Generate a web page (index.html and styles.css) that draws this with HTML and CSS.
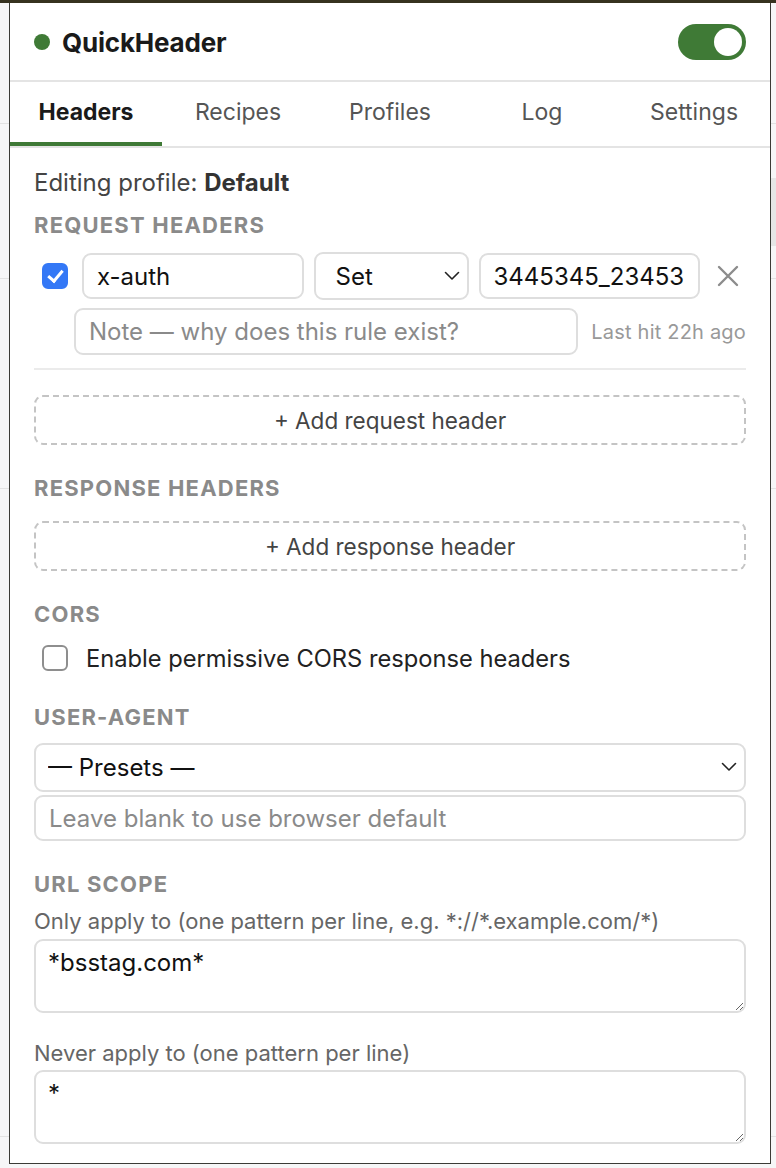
FILE: index.html
```html
<!DOCTYPE html>
<html lang="en">
<head>
<meta charset="UTF-8">
<meta name="viewport" content="width=device-width, initial-scale=1.0">
<title>QuickHeader</title>
<link rel="stylesheet" href="styles.css">
</head>
<body>
<div class="popup">
    <header class="topbar">
        <div class="brand">
            <span class="dot"></span>
            <h1>QuickHeader</h1>
        </div>
        <div class="switch on"><span class="knob"></span></div>
    </header>

    <nav class="tabs">
        <a class="tab active">Headers</a>
        <a class="tab">Recipes</a>
        <a class="tab">Profiles</a>
        <a class="tab">Log</a>
        <a class="tab">Settings</a>
    </nav>

    <main class="content">
        <p class="profile">Editing profile: <b>Default</b></p>

        <h2 class="section-title first">Request headers</h2>
        <div class="rule">
            <div class="rule-main">
                <input type="checkbox" class="check" checked>
                <input class="field" type="text" value="x-auth">
                <div class="select-wrap op">
                    <select class="field select">
                        <option>Set</option>
                        <option>Append</option>
                        <option>Remove</option>
                    </select>
                    <svg class="chev" width="16" height="10" viewBox="0 0 16 10"><path d="M1.5 1.5 8 8l6.5-6.5" fill="none" stroke="#222" stroke-width="1.6" stroke-linecap="round" stroke-linejoin="round"/></svg>
                </div>
                <input class="field" type="text" value="3445345_23453">
                <button class="remove" title="Remove">
                    <svg width="22" height="22" viewBox="0 0 22 22"><path d="M2 2l18 18M20 2 2 20" stroke="#8c8c8c" stroke-width="2.4" stroke-linecap="round"/></svg>
                </button>
            </div>
            <div class="rule-note">
                <input class="field" type="text" placeholder="Note — why does this rule exist?">
                <span class="last-hit">Last hit 22h ago</span>
            </div>
        </div>
        <button class="add-btn first">+ Add request header</button>

        <h2 class="section-title">Response headers</h2>
        <button class="add-btn">+ Add response header</button>

        <h2 class="section-title">CORS</h2>
        <label class="check-row">
            <input type="checkbox" class="check">
            <span>Enable permissive CORS response headers</span>
        </label>

        <h2 class="section-title ua">User-Agent</h2>
        <div class="select-wrap ua-select">
            <select class="field select wide">
                <option>— Presets —</option>
            </select>
            <svg class="chev" width="16" height="10" viewBox="0 0 16 10"><path d="M1.5 1.5 8 8l6.5-6.5" fill="none" stroke="#222" stroke-width="1.6" stroke-linecap="round" stroke-linejoin="round"/></svg>
        </div>
        <input class="field ua-input" type="text" placeholder="Leave blank to use browser default">

        <h2 class="section-title">URL scope</h2>
        <p class="hint">Only apply to (one pattern per line, e.g. *://*.example.com/*)</p>
        <textarea class="field area">*bsstag.com*</textarea>
        <p class="hint never">Never apply to (one pattern per line)</p>
        <textarea class="field area">*</textarea>
    </main>
</div>
</body>
</html>
```

FILE: styles.css
```css
html, body {
    margin: 0;
    padding: 0;
    height: 100%;
    overflow: hidden;
}
body {
    font-family: Inter, "Noto Sans", "Liberation Sans", sans-serif;
    color: #1d1d1d;
    background:
        linear-gradient(#36321f, #36321f) top left / 100% 3px no-repeat,
        linear-gradient(#e6e6e6, #e6e6e6) right 0 top 178px / 6px 68px no-repeat,
        linear-gradient(#e2e2e2, #e2e2e2) 0 123px / 100% 1px no-repeat,
        linear-gradient(#e2e2e2, #e2e2e2) 0 278px / 100% 1px no-repeat,
        linear-gradient(#e2e2e2, #e2e2e2) 0 488px / 100% 1px no-repeat,
        linear-gradient(#e2e2e2, #e2e2e2) 0 1136px / 100% 1px no-repeat,
        #f6f6f7;
}

.popup {
    width: 760px;
    margin: 3px 0 0 9px;
    background: #fff;
    border: 1px solid #3b3b36;
    border-top: 0;
}

/* header with brand + master switch */
.topbar {
    height: 79px;
    display: flex;
    align-items: center;
    justify-content: space-between;
    padding: 0 24px;
    border-bottom: 2px solid #e4e4e4;
    box-sizing: border-box;
}
.brand {
    display: flex;
    align-items: center;
    gap: 12px;
}
.dot {
    width: 16px;
    height: 16px;
    border-radius: 50%;
    background: #3f7a36;
}
.brand h1 {
    margin: 0;
    font-size: 26px;
    font-weight: 700;
    color: #1a1a1a;
    letter-spacing: -0.2px;
    padding-top: 2px;
}
.switch {
    width: 68px;
    height: 36px;
    border-radius: 18px;
    background: #ccc;
    display: flex;
    align-items: center;
    padding: 0 4px;
    box-sizing: border-box;
}
.switch.on {
    background: #3f7a36;
    justify-content: flex-end;
}
.knob {
    width: 28px;
    height: 28px;
    border-radius: 50%;
    background: #fff;
}

/* tabs */
.tabs {
    display: flex;
    border-bottom: 2px solid #e4e4e4;
}
.tab {
    flex: 1;
    height: 64px;
    display: flex;
    align-items: center;
    justify-content: center;
    font-size: 23px;
    color: #555;
    border-bottom: 4px solid transparent;
    box-sizing: border-box;
}
.tab.active {
    color: #1a1a1a;
    font-weight: 700;
    border-bottom-color: #3f7a36;
}

/* main panel */
.content {
    padding: 18px 24px 19px;
    display: flex;
    flex-direction: column;
}
.profile {
    margin: 0;
    font-size: 24px;
    line-height: 34px;
    color: #444;
}
.profile b {
    color: #333;
}
.section-title {
    margin: 29px 0 0;
    font-size: 22px;
    line-height: 28px;
    font-weight: 700;
    color: #8a8a8a;
    text-transform: uppercase;
    letter-spacing: 1.2px;
}
.section-title.first {
    margin-top: 11px;
}
.section-title.ua {
    margin-top: 30px;
}

.field {
    font-family: inherit;
    font-size: 24px;
    color: #111;
    height: 46px;
    padding: 0 13px;
    border: 2px solid #dedede;
    border-radius: 9px;
    background: #fff;
    box-sizing: border-box;
    outline: none;
    min-width: 0;
}
.field::placeholder {
    color: #8a8a8a;
}

/* one header rule */
.rule {
    margin-top: 13px;
    padding-bottom: 13px;
    border-bottom: 2px solid #ebebeb;
}
.rule-main {
    display: flex;
    align-items: center;
    gap: 10px;
}
.rule-main > .field {
    flex: 1 1 0;
}
.check {
    appearance: none;
    -webkit-appearance: none;
    width: 26px;
    height: 26px;
    margin: 0 4px 0 8px;
    border: 2px solid #8e8e8e;
    border-radius: 6px;
    background: #fff;
    box-sizing: border-box;
    flex: none;
    position: relative;
}
.check:checked {
    background: #3478f6;
    border-color: #3478f6;
}
.check:checked::after {
    content: "";
    position: absolute;
    left: 7px;
    top: 2px;
    width: 6px;
    height: 12px;
    border: solid #fff;
    border-width: 0 3px 3px 0;
    transform: rotate(40deg);
}
.select-wrap {
    position: relative;
    display: flex;
}
.select-wrap.op {
    width: 155px;
    flex: none;
}
.select {
    appearance: none;
    -webkit-appearance: none;
    width: 100%;
    height: 48px;
    padding-left: 20px;
}
.chev {
    position: absolute;
    right: 9px;
    top: 19px;
    pointer-events: none;
}
.remove {
    width: 36px;
    height: 36px;
    flex: none;
    border: 0;
    background: none;
    padding: 0;
    display: flex;
    align-items: center;
    justify-content: center;
}
.rule-note {
    display: flex;
    align-items: center;
    gap: 13px;
    margin: 8px 0 0 40px;
}
.rule-note .field {
    flex: 1;
    height: 47px;
}
.last-hit {
    font-size: 20px;
    letter-spacing: 0.2px;
    color: #999;
    white-space: nowrap;
}

.add-btn {
    height: 50px;
    margin-top: 19px;
    font-family: inherit;
    font-size: 22.5px;
    color: #444;
    background: #fff;
    border: 2px dashed #c4c4c4;
    border-radius: 9px;
}
.add-btn.first {
    margin-top: 25px;
}

.check-row {
    display: flex;
    align-items: center;
    gap: 18px;
    margin-top: 15px;
    height: 30px;
    font-size: 23.7px;
    color: #222;
}
.check-row .check {
    margin: 0 0 0 8px;
}

.ua-select {
    margin-top: 12px;
}
.select.wide {
    height: 49px;
    padding-left: 12px;
}
.ua-input {
    margin-top: 3px;
}

.hint {
    margin: 9px 0 0;
    font-size: 22px;
    line-height: 28px;
    color: #666;
}
.hint.never {
    margin-top: 26px;
}
.area {
    height: 74px;
    margin-top: 4px;
    padding: 7px 12px;
    resize: vertical;
    line-height: 30px;
}
.hint.never + .area {
    margin-top: 3px;
}
```
